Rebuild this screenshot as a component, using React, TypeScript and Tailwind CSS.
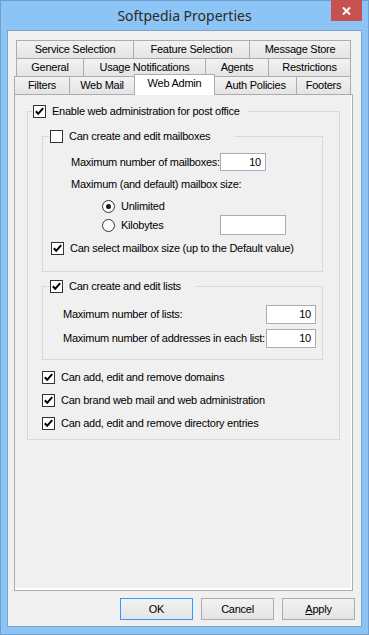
import React from "react";

function Check({ checked }: { checked: boolean }) {
  return (
    <span className="flex h-[13px] w-[13px] shrink-0 items-center justify-center border border-[#333333] bg-white">
      {checked && (
        <svg width="11" height="11" viewBox="0 0 11 11">
          <path d="M1.8 5.2 L4.2 7.8 L9.2 2.2" fill="none" stroke="#000" strokeWidth="2" />
        </svg>
      )}
    </span>
  );
}

function Radio({ checked }: { checked: boolean }) {
  return (
    <span className="flex h-[13px] w-[13px] shrink-0 items-center justify-center rounded-full border border-[#333333] bg-white">
      {checked && <span className="h-[5px] w-[5px] rounded-full bg-[#1a1a1a]" />}
    </span>
  );
}

const tab =
  "flex h-[18px] items-center justify-center border-t border-[#acacac] bg-gradient-to-b from-[#f2f2f2] to-[#e4e4e4]";

export default function App() {
  return (
    <div className="flex h-[635px] w-[369px] flex-col border border-[#6e9fd0] bg-[#8cc5f5] font-['Liberation_Sans',Arial,sans-serif] text-[11px] tracking-[-0.25px] text-black">
      {/* title bar */}
      <div className="grid h-[29px] grid-cols-[1fr_auto_1fr] items-center">
        <div />
        <div className="font-['Noto_Sans',sans-serif] text-[14px] tracking-normal text-[#2b2b2b]">
          Softpedia Properties
        </div>
        <div className="flex h-full items-start justify-end pr-[6px]">
          <div className="-mt-[1px] flex h-[21px] w-[31px] items-center justify-center bg-[#c75050]">
            <svg width="9" height="8" viewBox="0 0 9 8">
              <path d="M1 0.5 L8 7.5 M8 0.5 L1 7.5" stroke="#fff" strokeWidth="2" />
            </svg>
          </div>
        </div>
      </div>

      {/* client area */}
      <div className="mx-[6px] h-[597px] border border-[#7fa3c6] bg-[#f0f0f0] pt-[9px]">
        {/* tab rows */}
        <div className="ml-[8px] flex h-[18px]">
          <div className={`${tab} w-[117px] border-l`}>Service Selection</div>
          <div className={`${tab} w-[116px] border-l`}>Feature Selection</div>
          <div className={`${tab} w-[102px] border-l border-r`}>Message Store</div>
        </div>
        <div className="ml-[8px] flex h-[18px]">
          <div className={`${tab} w-[67px] border-l`}>General</div>
          <div className={`${tab} w-[122px] border-l`}>Usage Notifications</div>
          <div className={`${tab} w-[63px] border-l`}>Agents</div>
          <div className={`${tab} w-[83px] border-l border-r`}>Restrictions</div>
        </div>
        <div className="ml-[6px] flex h-[18px] items-start">
          <div className={`${tab} w-[55px] border-l`}>Filters</div>
          <div className={`${tab} w-[65px] border-l`}>Web Mail</div>
          <div className="relative z-10 -mt-[2px] flex h-[21px] w-[81px] items-center justify-center border-l border-r border-t border-[#acacac] bg-white pb-[3px]">
            Web Admin
          </div>
          <div className={`${tab} w-[81px]`}>Auth Policies</div>
          <div className={`${tab} w-[55px] border-l border-r`}>Footers</div>
        </div>

        {/* panel */}
        <div className="ml-[6px] h-[497px] w-[339px] border border-[#adadad] bg-[#f0f0f0]">
          <div className="h-full w-full border-b-2 border-r border-white pl-[12px] pt-[10px]">
            <fieldset className="w-[313px] border border-[#d8d8d8] p-0">
              <legend className="ml-[4px] pl-[1px] pr-[8px] leading-none">
                <span className="flex h-[13px] items-center whitespace-nowrap">
                  <Check checked />
                  <span className="ml-[6px]">Enable web administration for post office</span>
                </span>
              </legend>
              <div className="pb-[9px] pl-[14px] pt-[12px]">
                {/* mailboxes group */}
                <fieldset className="w-[281px] border border-[#d8d8d8] p-0">
                  <legend className="ml-[6px] pl-[1px] pr-[25px] leading-none">
                    <span className="flex h-[13px] items-center whitespace-nowrap">
                      <Check checked={false} />
                      <span className="ml-[6px]">Can create and edit mailboxes</span>
                    </span>
                  </legend>
                  <div className="pb-[16px] pt-[10px]">
                    <div className="flex h-[18px] items-center pl-[28px]">
                      <span className="w-[149px]">Maximum number of mailboxes:</span>
                      <span className="flex h-[18px] w-[46px] items-center justify-end border border-[#abadb3] bg-white pr-[4px]">
                        10
                      </span>
                    </div>
                    <div className="mt-[6px] flex h-[14px] items-center pl-[28px]">
                      Maximum (and default) mailbox size:
                    </div>
                    <div className="mt-[8px] flex h-[14px] items-center pl-[59px]">
                      <Radio checked />
                      <span className="ml-[6px]">Unlimited</span>
                    </div>
                    <div className="mt-[2px] flex h-[20px] items-center pl-[59px]">
                      <div className="flex w-[118px] items-center">
                        <Radio checked={false} />
                        <span className="ml-[6px]">Kilobytes</span>
                      </div>
                      <span className="h-[20px] w-[66px] border border-[#abadb3] bg-white" />
                    </div>
                    <div className="mt-[6px] flex h-[14px] items-center pl-[8px]">
                      <Check checked />
                      <span className="ml-[6px]">Can select mailbox size (up to the Default value)</span>
                    </div>
                  </div>
                </fieldset>

                {/* lists group */}
                <fieldset className="mt-[8px] w-[281px] border border-[#d8d8d8] p-0">
                  <legend className="ml-[6px] pl-[1px] pr-[15px] leading-none">
                    <span className="flex h-[13px] items-center whitespace-nowrap">
                      <Check checked />
                      <span className="ml-[6px]">Can create and edit lists</span>
                    </span>
                  </legend>
                  <div className="pb-[11px] pt-[12px]">
                    <div className="flex h-[19px] items-center pl-[20px]">
                      <span className="w-[203px]">Maximum number of lists:</span>
                      <span className="flex h-[19px] w-[50px] items-center justify-end border border-[#abadb3] bg-white pr-[4px]">
                        10
                      </span>
                    </div>
                    <div className="mt-[5px] flex h-[19px] items-center pl-[20px]">
                      <span className="w-[203px]">Maximum number of addresses in each list:</span>
                      <span className="flex h-[19px] w-[50px] items-center justify-end border border-[#abadb3] bg-white pr-[4px]">
                        10
                      </span>
                    </div>
                  </div>
                </fieldset>

                <div className="mt-[10px] flex h-[14px] items-center">
                  <Check checked />
                  <span className="ml-[6px]">Can add, edit and remove domains</span>
                </div>
                <div className="mt-[9px] flex h-[14px] items-center">
                  <Check checked />
                  <span className="ml-[6px]">Can brand web mail and web administration</span>
                </div>
                <div className="mt-[9px] flex h-[14px] items-center">
                  <Check checked />
                  <span className="ml-[6px]">Can add, edit and remove directory entries</span>
                </div>
              </div>
            </fieldset>
          </div>
        </div>

        {/* buttons */}
        <div className="mt-[7px] flex justify-end gap-[8px] pr-[6px]">
          <div className="flex h-[22px] w-[73px] items-center justify-center border border-[#3399ff] bg-gradient-to-b from-[#f2f2f2] to-[#e4e4e4]">
            OK
          </div>
          <div className="flex h-[22px] w-[73px] items-center justify-center border border-[#acacac] bg-gradient-to-b from-[#f2f2f2] to-[#e4e4e4]">
            Cancel
          </div>
          <div className="flex h-[22px] w-[73px] items-center justify-center border border-[#acacac] bg-gradient-to-b from-[#f2f2f2] to-[#e4e4e4]">
            <span>
              <span className="underline">A</span>pply
            </span>
          </div>
        </div>
      </div>
    </div>
  );
}
